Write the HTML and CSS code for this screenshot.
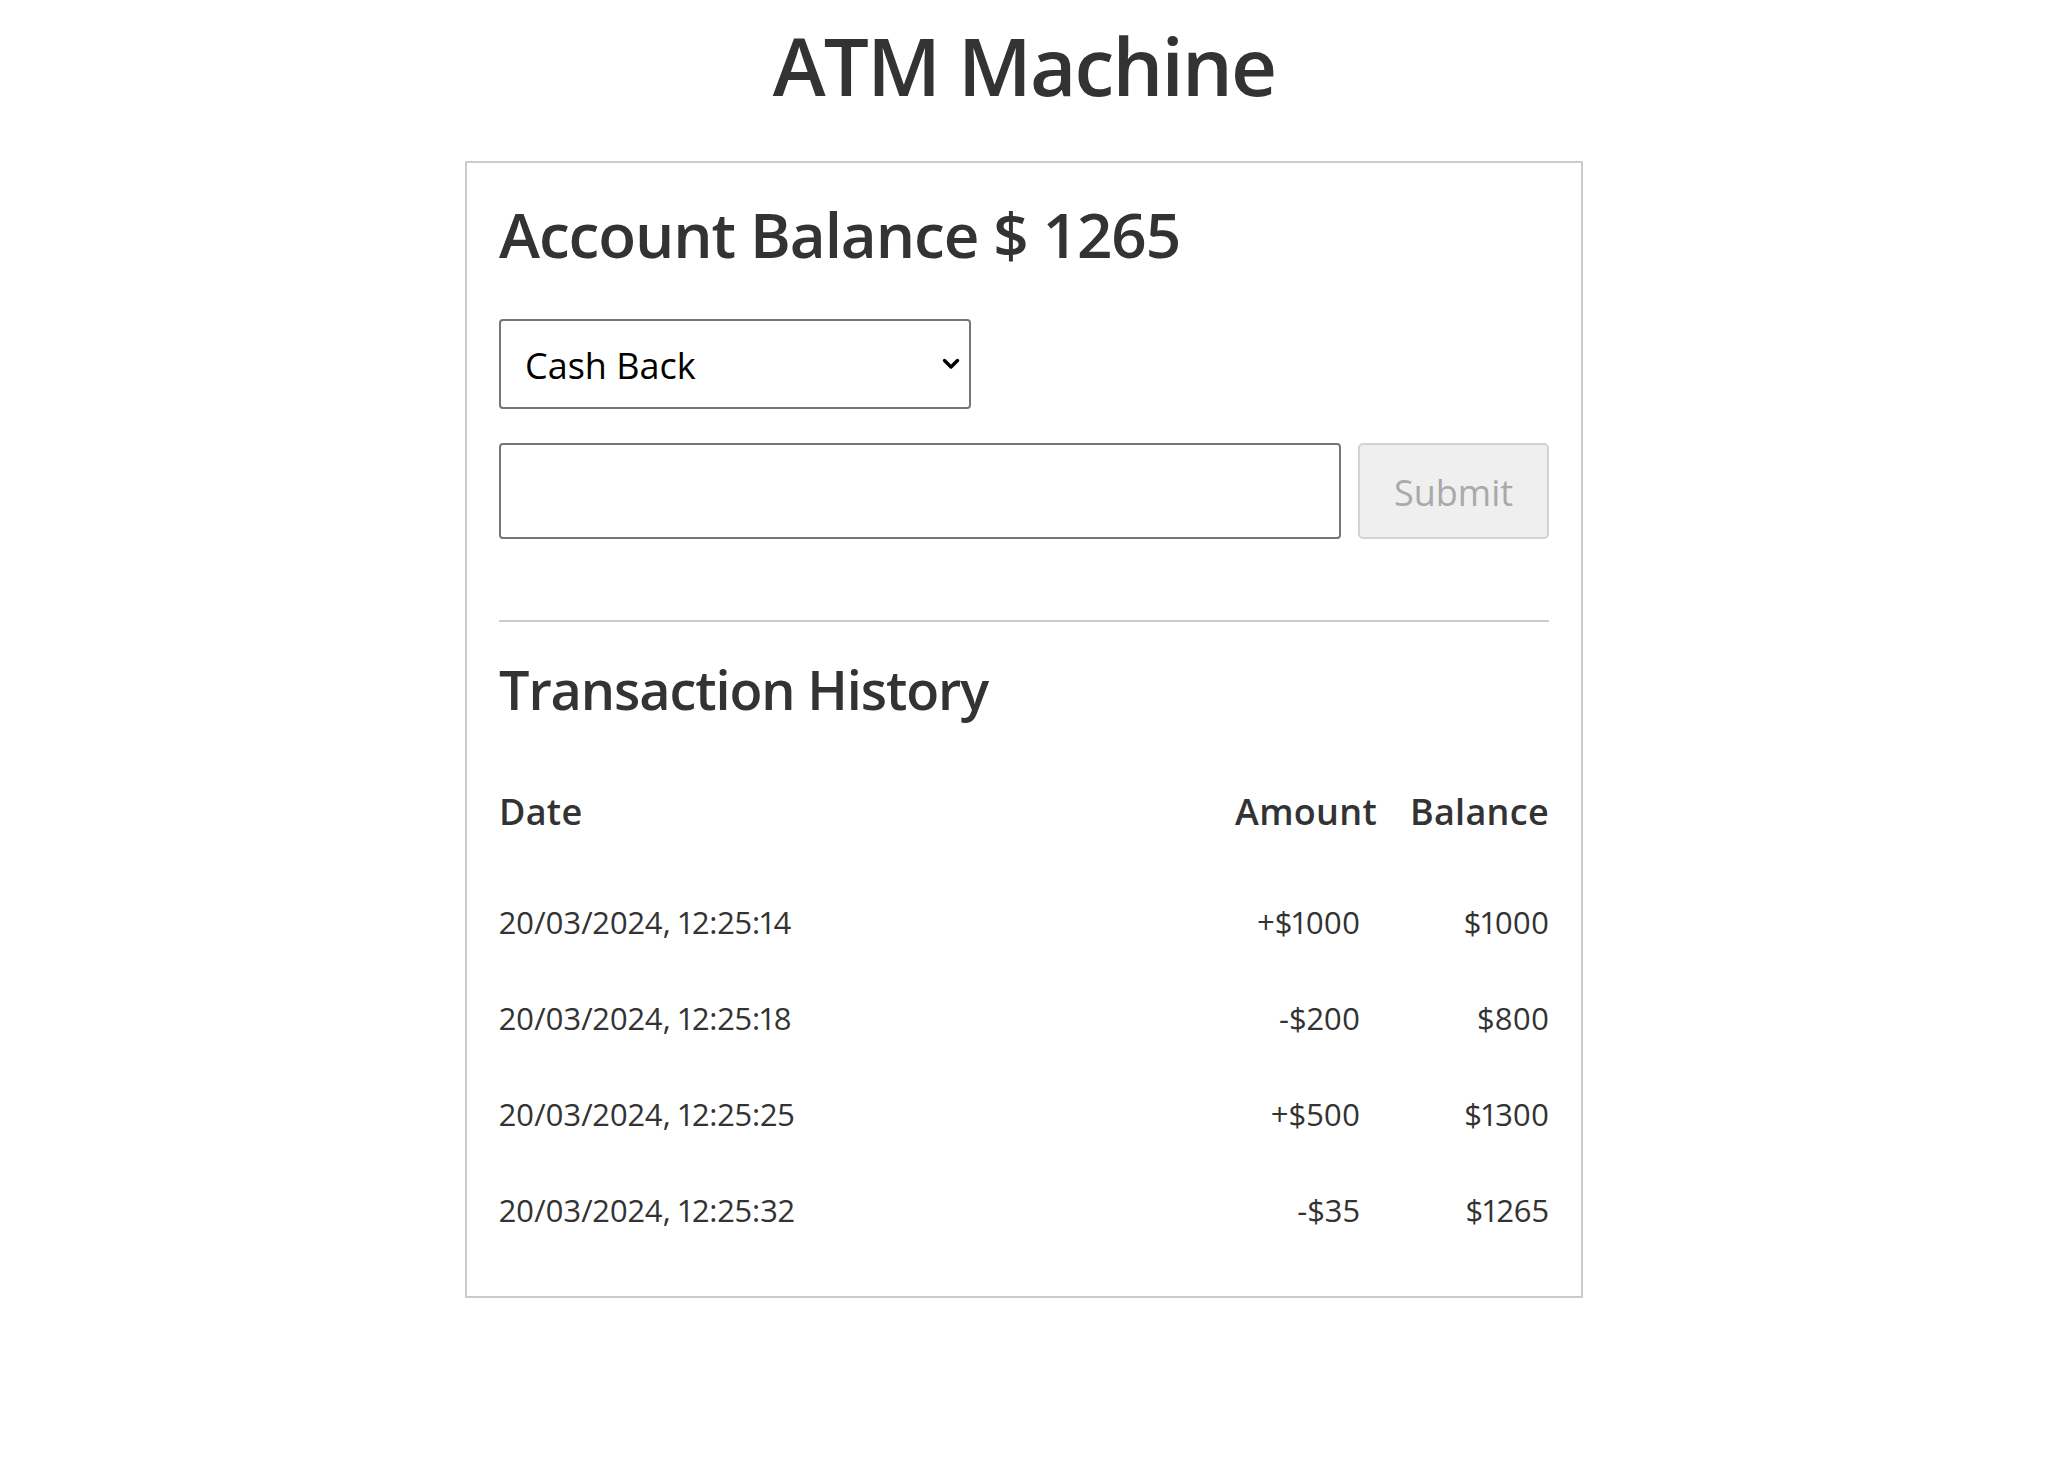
FILE: index.html
```html
<!DOCTYPE html>
<html lang="en">
<head>
<meta charset="utf-8">
<title>ATM Machine</title>
<link rel="stylesheet" href="styles.css">
</head>
<body>
  <h1 class="title">ATM Machine</h1>
  <main class="card">
    <h2 class="balance">Account Balance $ 1265</h2>
    <div class="select-wrap">
      <select class="type-select">
        <option>Cash Back</option>
        <option>Deposit</option>
      </select>
      <svg class="chevron" width="18" height="12" viewBox="0 0 18 12"><polyline points="2.5,2.5 9,9 15.5,2.5" fill="none" stroke="#000" stroke-width="3.4" stroke-linecap="round" stroke-linejoin="round"/></svg>
    </div>
    <form class="amount-row">
      <input class="amount-input" type="text">
      <button class="submit-btn" type="button" disabled>Submit</button>
    </form>
    <hr class="divider">
    <h3 class="history-title">Transaction History</h3>
    <div class="history">
      <div class="cell head">Date</div>
      <div class="cell head num">Amount</div>
      <div class="cell head num">Balance</div>

      <div class="cell">20/03/2024, 12:25:14</div>
      <div class="cell num amt">+$1000</div>
      <div class="cell num">$1000</div>

      <div class="cell">20/03/2024, 12:25:18</div>
      <div class="cell num amt">-$200</div>
      <div class="cell num">$800</div>

      <div class="cell">20/03/2024, 12:25:25</div>
      <div class="cell num amt">+$500</div>
      <div class="cell num">$1300</div>

      <div class="cell">20/03/2024, 12:25:32</div>
      <div class="cell num amt">-$35</div>
      <div class="cell num">$1265</div>
    </div>
  </main>
</body>
</html>
```
FILE: styles.css
```css
* { box-sizing: border-box; }

body {
  margin: 0;
  background: #fff;
  color: #333;
  font-family: "Open Sans", "Noto Sans", sans-serif;
}

.title {
  margin: 17px 0 0;
  font-size: 80px;
  line-height: 96px;
  font-weight: 600;
  text-align: center;
  letter-spacing: -1.8px;
}

.card {
  width: 1118px;
  margin: 48px auto 0;
  border: 2px solid #cccccc;
  padding: 32px 32px 38px;
}

.balance {
  margin: 2px 0 0;
  font-size: 62px;
  line-height: 74px;
  font-weight: 600;
  letter-spacing: -1.1px;
}

.select-wrap {
  position: relative;
  width: 472px;
  margin-top: 48px;
}

.type-select {
  appearance: none;
  -webkit-appearance: none;
  display: block;
  width: 472px;
  height: 90px;
  border: 2px solid #767676;
  border-radius: 4px;
  background: #fff;
  padding: 2px 0 0 24px;
  font-family: "Open Sans", sans-serif;
  font-size: 36px;
  color: #000;
}

.chevron {
  position: absolute;
  right: 11px;
  top: 39px;
  pointer-events: none;
}

.amount-row {
  display: flex;
  gap: 17px;
  margin: 34px 0 0;
}

.amount-input {
  flex: 1;
  height: 96px;
  border: 2px solid #767676;
  border-radius: 4px;
  font-family: "Open Sans", sans-serif;
  font-size: 36px;
  padding: 0 20px;
}

.submit-btn {
  width: 191px;
  height: 96px;
  background: #efefef;
  border: 2px solid #d2d2d2;
  border-radius: 5px;
  color: #a9a9a9;
  font-family: "Open Sans", sans-serif;
  font-size: 36px;
  padding: 2px 0 0;
}

.divider {
  margin: 81px 0 0;
  border: 0;
  border-top: 2px solid #cccccc;
}

.history-title {
  margin: 35px 0 0;
  font-size: 54px;
  line-height: 64px;
  font-weight: 600;
  letter-spacing: -1.1px;
}

.history {
  display: grid;
  grid-template-columns: 1fr 160px 154px;
  column-gap: 18px;
  margin-top: 67px;
}

.cell {
  font-size: 31px;
  line-height: 96px;
  letter-spacing: 0;
  font-variant-numeric: proportional-nums;
  white-space: nowrap;
}

.cell.head {
  font-size: 36px;
  line-height: 48px;
  font-weight: 600;
  letter-spacing: 0.3px;
  margin-bottom: 38px;
}

.num { text-align: right; }

.cell.amt { padding-right: 17px; }
```
